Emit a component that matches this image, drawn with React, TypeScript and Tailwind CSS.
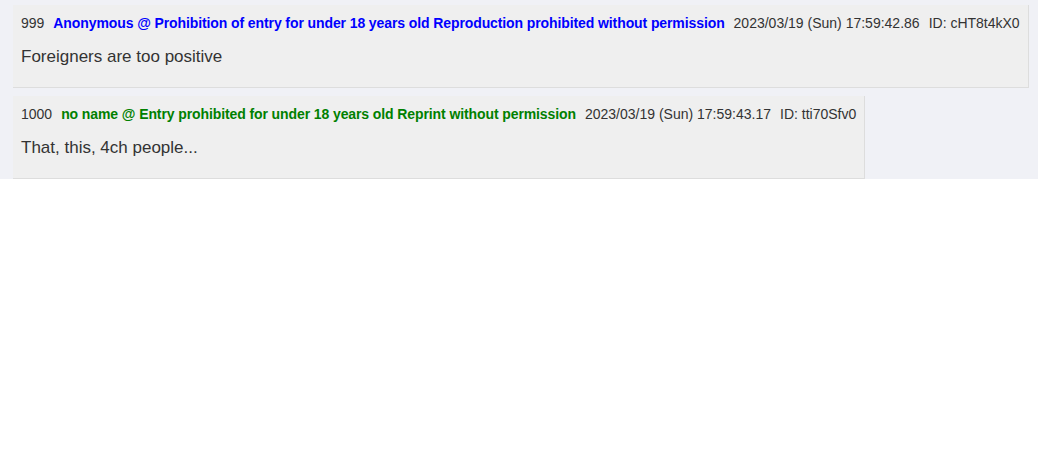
import React from 'react';

type Post = {
  no: number;
  name: string;
  nameClass: string;
  date: string;
  id: string;
  body: string;
};

const posts: Post[] = [
  {
    no: 999,
    name: 'Anonymous @ Prohibition of entry for under 18 years old Reproduction prohibited without permission',
    nameClass: 'text-[#0000ff]',
    date: '2023/03/19 (Sun) 17:59:42.86',
    id: 'cHT8t4kX0',
    body: 'Foreigners are too positive',
  },
  {
    no: 1000,
    name: 'no name @ Entry prohibited for under 18 years old Reprint without permission',
    nameClass: 'text-[#008000]',
    date: '2023/03/19 (Sun) 17:59:43.17',
    id: 'tti70Sfv0',
    body: 'That, this, 4ch people...',
  },
];

const PostItem: React.FC<{ post: Post }> = ({ post }) => (
  <div className="w-fit bg-[#efefef] border-r border-b border-[#dddddd] px-2 pt-2 pb-[18px] mb-2 last:mb-0">
    <div className="flex items-center text-[14px] leading-5 text-[#333333] whitespace-nowrap">
      <span>{post.no}</span>
      <span className={`ml-[9px] font-bold tracking-[-0.1px] ${post.nameClass}`}>{post.name}</span>
      <span className="ml-[9px]">{post.date}</span>
      <span className="ml-[9px]">ID: {post.id}</span>
    </div>
    <div className="mt-3 text-[17px] leading-6 text-[#333333]">{post.body}</div>
  </div>
);

export default function App() {
  return (
    <div className="min-h-[460px] bg-white font-['Liberation_Sans',Arial,sans-serif]">
      <div className="bg-[#f0f1f6] pt-[5px] pl-[13px]">
        {posts.map((p) => (
          <PostItem key={p.no} post={p} />
        ))}
      </div>
    </div>
  );
}
